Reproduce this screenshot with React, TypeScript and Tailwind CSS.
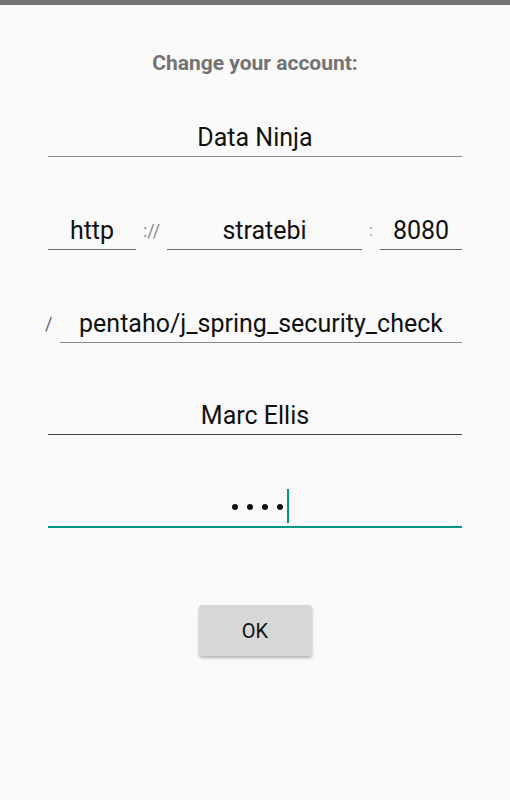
import React from 'react';

interface FieldProps {
  value: string;
  className?: string;
  line?: string;
}

// Android-like EditText: centered text over a thin underline
const Field: React.FC<FieldProps> = ({ value, className = '', line = 'border-[#8a8a8a]' }) => (
  <div className={`h-[39px] flex items-center justify-center border-b ${line} ${className}`}>
    <span className="text-[25px] leading-none text-[#111111]">{value}</span>
  </div>
);

const App: React.FC = () => {
  return (
    <div
      className="w-[510px] h-[800px] bg-[#fafafa] flex flex-col"
      style={{ fontFamily: 'Roboto, "Liberation Sans", sans-serif' }}
    >
      <div className="h-[5px] bg-[#737373]" />

      <div className="flex flex-col px-[48px]">
        <h1 className="mt-[46px] h-[24px] text-center text-[21px] leading-[24px] font-bold text-[#737373]">
          Change your account:
        </h1>

        <Field value="Data Ninja" className="mt-[43px]" />

        <div className="mt-[54px] flex items-end">
          <Field value="http" className="w-[88px]" line="border-[#6a6a6a]" />
          <span className="w-[31px] h-[39px] flex items-center justify-center text-[18px] text-[#8a8a8a]">
            ://
          </span>
          <Field value="stratebi" className="w-[195px]" line="border-[#6a6a6a]" />
          <span className="w-[18px] h-[39px] flex items-center justify-center text-[17px] text-[#9a9a9a]">
            :
          </span>
          <Field value="8080" className="w-[82px]" line="border-[#6a6a6a]" />
        </div>

        <div className="mt-[54px] flex items-end -ml-[4px]">
          <span className="w-[16px] h-[39px] flex items-center justify-start pl-[1px] text-[18px] text-[#666666]">
            /
          </span>
          <Field value="pentaho/j_spring_security_check" className="flex-1" line="border-[#8a8a8a]" />
        </div>

        <Field value="Marc Ellis" className="mt-[53px]" line="border-[#444444]" />

        <div className="mt-[53px] h-[40px] flex items-center justify-center border-b-2 border-[#009688]">
          <div className="flex items-center gap-[9px] ml-[10px]">
            <span className="w-[6px] h-[6px] rounded-full bg-[#111111]" />
            <span className="w-[6px] h-[6px] rounded-full bg-[#111111]" />
            <span className="w-[6px] h-[6px] rounded-full bg-[#111111]" />
            <span className="w-[6px] h-[6px] rounded-full bg-[#111111]" />
            <span className="w-[2px] h-[34px] bg-[#009688] ml-[-5px] -mt-[2px]" />
          </div>
        </div>

        <div className="mt-[77px] flex justify-center">
          <button className="w-[113px] h-[51px] rounded-[3px] bg-[#d6d7d7] shadow-[0_2px_3px_rgba(0,0,0,0.28)] text-[20px] font-normal text-[#111111]">
            OK
          </button>
        </div>
      </div>
    </div>
  );
};

export default App;
